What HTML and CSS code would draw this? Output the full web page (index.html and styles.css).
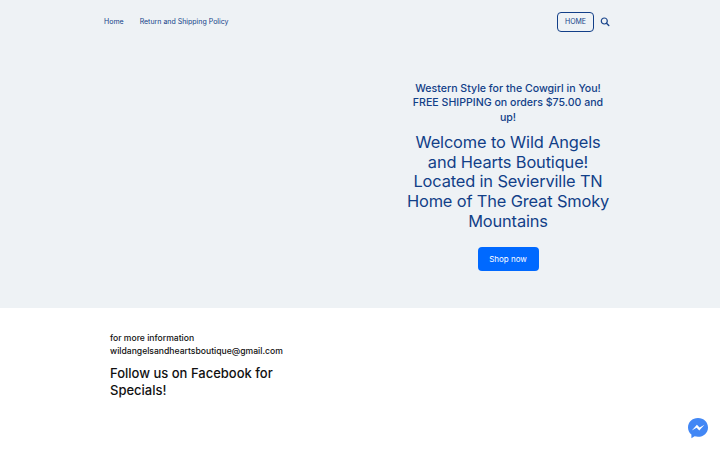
FILE: index.html
```html
<!DOCTYPE html>
<html lang="en">
<head>
    <meta charset="UTF-8">
    <meta name="viewport" content="width=device-width, initial-scale=1.0">
    <title>Wild Angels and Hearts Boutique</title>
    <link rel="stylesheet" href="styles.css">
</head>
<body>
    <div class="cover">
        <header>
            <nav>
                <a href="#">Home</a>
                <a href="#">Return and Shipping Policy</a>
            </nav>
            <div class="actions">
                <a href="#" class="home-btn">HOME</a>
                <svg class="search" viewBox="0 0 10 10" width="10" height="10">
                    <circle cx="4.3" cy="4" r="3" fill="none" stroke="#1b468c" stroke-width="1.2"/>
                    <path d="M6.500 6.300L8.800 8.600" stroke="#1b468c" stroke-width="1.4" stroke-linecap="round"/>
                </svg>
            </div>
        </header>

        <section class="hero">
            <h2>Western Style for the Cowgirl in You!<br>FREE SHIPPING on orders $75.00 and<br>up!</h2>
            <h1>Welcome to Wild Angels<br>and Hearts Boutique!<br>Located in Sevierville TN<br>Home of The Great Smoky<br>Mountains</h1>
            <a href="#" class="shop-btn">Shop now</a>
        </section>
    </div>

    <section class="info">
        <p>for more information<br>wildangelsandheartsboutique@gmail.com</p>
        <h3>Follow us on Facebook for<br>Specials!</h3>
    </section>

    <a href="#" class="messenger" aria-label="Messenger">
        <svg viewBox="0 0 22 22" width="22" height="22">
            <path d="M11 1C5.300 1 1 5 1 10.400c0 2.900 1.300 5.400 3.400 7.100v3.700l3.200-1.900c1.100.3 2.200.5 3.400.5 5.700 0 10-4 10-9.400S16.700 1 11 1z" fill="#4287f5"/>
            <path d="M4.800 13.400l5.100-5.700 2.700 2.700 4.900-2.700-5.200 5.700-2.700-2.700z" fill="#fff"/>
        </svg>
    </a>
</body>
</html>
```

FILE: styles.css
```css
body {
    font-family: Inter, sans-serif;
    background-color: #fff;
    margin: 0;
    color: #111;
}
a {
    color: #123f88;
    text-decoration: none;
}
.cover {
    height: 308px;
    background-color: #eef2f5;
    color: #123f88;
}
header {
    display: flex;
    justify-content: space-between;
    align-items: center;
    width: 506px;
    height: 44px;
    margin-left: 104px;
    font-size: 7px;
}
nav {
    display: flex;
    gap: 16px;
    padding-bottom: 2px;
}
.actions {
    display: flex;
    align-items: center;
    gap: 6px;
}
.home-btn {
    box-sizing: border-box;
    width: 37px;
    height: 20px;
    line-height: 18px;
    text-align: center;
    border: 1px solid #123f88;
    border-radius: 4px;
}
.search {
    display: block;
}
.hero {
    width: 212px;
    margin-left: 402px;
    padding-top: 38px;
    text-align: center;
}
h1, h2, h3, p {
    margin: 0;
}
.hero h2 {
    font-size: 10.600px;
    font-weight: 500;
    line-height: 14.300px;
}
.hero h1 {
    margin-top: 8px;
    font-size: 16.400px;
    font-weight: 400;
    line-height: 19.700px;
    letter-spacing: -0.14px;
}
.shop-btn {
    display: block;
    width: 61px;
    height: 24px;
    margin: 16px auto 0;
    line-height: 24px;
    font-size: 8px;
    color: #fff;
    background-color: #0069ff;
    border-radius: 4px;
}
.info {
    padding: 24px 0 0 110px;
}
.info p {
    font-size: 8.600px;
    font-weight: 500;
    line-height: 12.500px;
}
.info h3 {
    margin-top: 8px;
    font-size: 13px;
    font-weight: 500;
    line-height: 16.700px;
}
.messenger {
    position: fixed;
    right: 11px;
    bottom: 11px;
}
.messenger svg {
    display: block;
}
```
